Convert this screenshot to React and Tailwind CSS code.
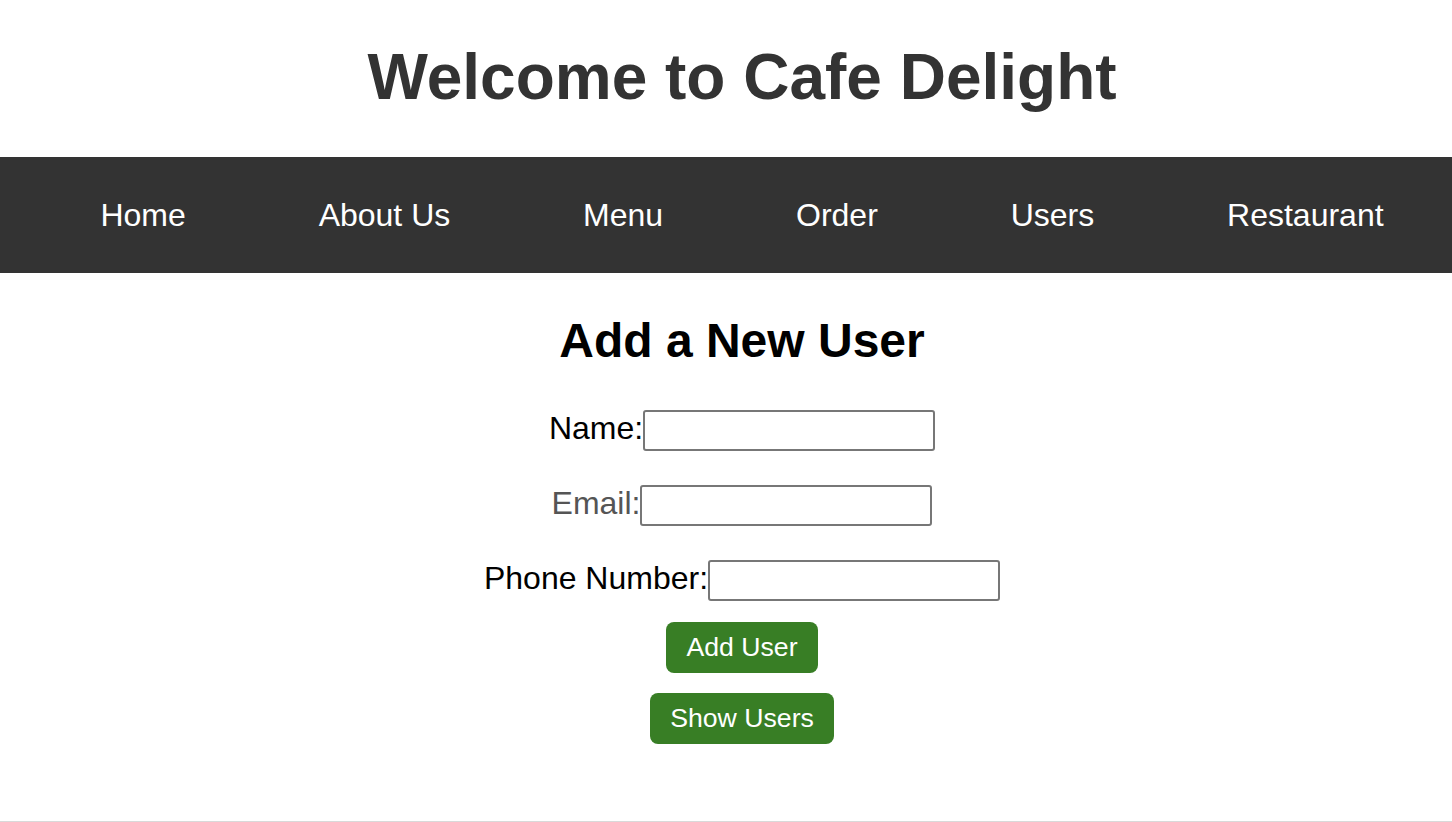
import React from "react";

const font = { fontFamily: '"Liberation Sans", Arial, sans-serif' };

function Row({ label, labelClass = "text-black" }) {
  return (
    <div className="flex items-center justify-center h-[41px]">
      <label className={`text-[32px] leading-[normal] mb-[4px] ${labelClass}`}>{label}</label>
      <input
        type="text"
        className="w-[292px] h-[41px] border-2 border-[#777777] rounded-[3px] bg-white outline-none"
      />
    </div>
  );
}

export default function App() {
  const nav = ["Home", "About Us", "Menu", "Order", "Users", "Restaurant"];
  return (
    <div className="bg-white min-h-screen" style={font}>
      <header className="pl-[32px]">
        <h1 className="text-center text-[64px] font-bold leading-[normal] text-[#333333] pt-[40px] pb-[43px]">
          Welcome to Cafe Delight
        </h1>
      </header>
      <nav className="bg-[#333333] h-[116px] flex items-center pl-[34px] pr-[2px]">
        <ul className="flex w-full justify-around">
          {nav.map((n) => (
            <li key={n} className="text-white text-[32px] leading-[normal]">
              {n}
            </li>
          ))}
        </ul>
      </nav>
      <main className="pl-[32px] pt-[40px] flex flex-col items-center">
        <h2 className="text-[48px] font-bold leading-[normal] text-black">Add a New User</h2>
        <div className="mt-[42px] flex flex-col gap-[34px]">
          <Row label="Name:" />
          <Row label="Email:" labelClass="text-[#555555]" />
          <Row label="Phone Number:" />
        </div>
        <div className="mt-[21px] flex flex-col items-center gap-[20px]">
          <button className="bg-[#387e25] text-white text-[26.67px] leading-[normal] px-[20.5px] py-[10px] rounded-[8px]">
            Add User
          </button>
          <button className="bg-[#387e25] text-white text-[26.67px] leading-[normal] px-[20.5px] py-[10px] rounded-[8px]">
            Show Users
          </button>
        </div>
      </main>
      <footer className="mt-[77px] border-t border-[#d9d9d9] h-[120px]"></footer>
    </div>
  );
}
